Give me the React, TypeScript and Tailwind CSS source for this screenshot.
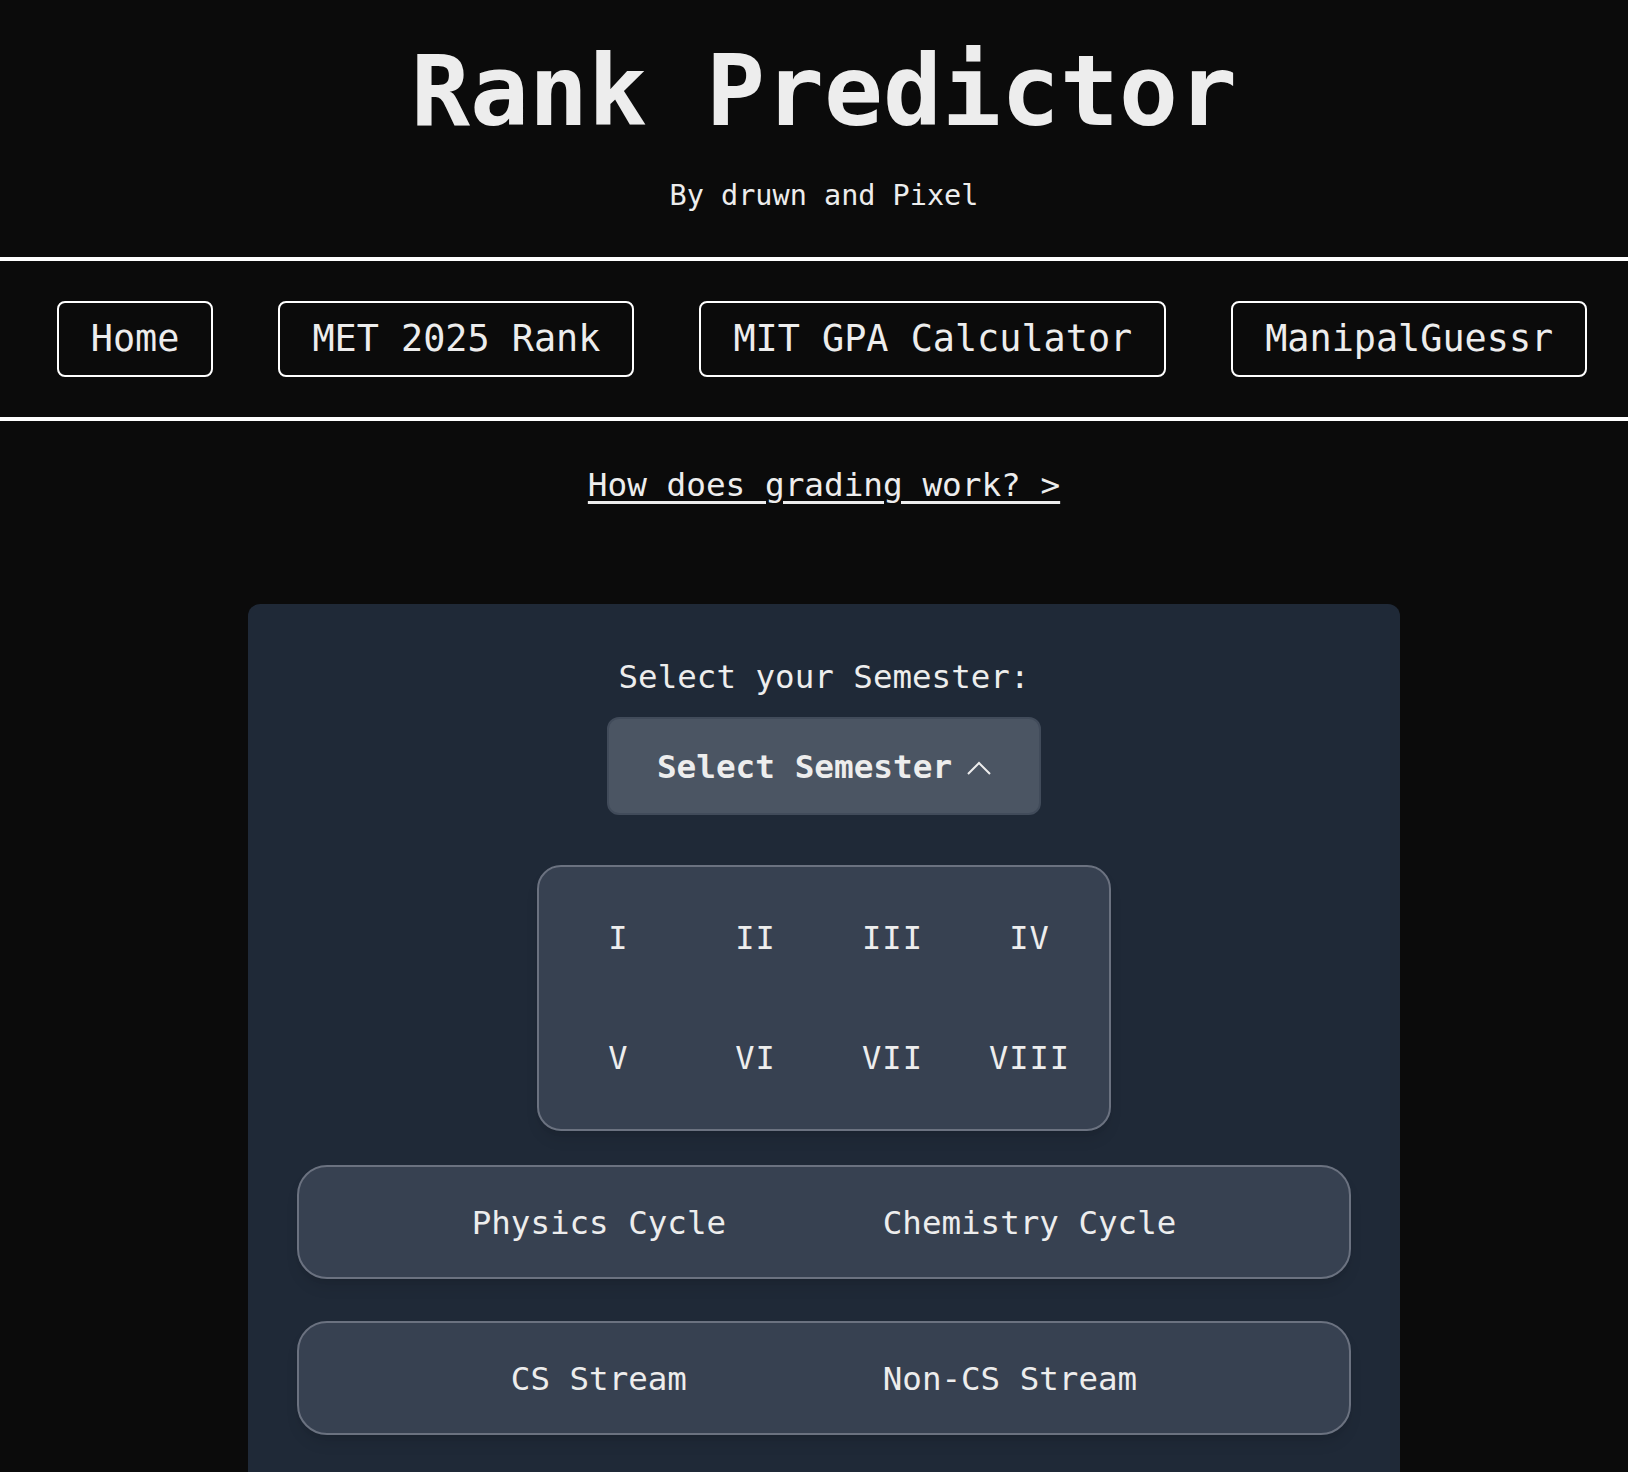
const font = { fontFamily: '"DejaVu Sans Mono", "Liberation Mono", monospace' };

const navItems = ["Home", "MET 2025 Rank", "MIT GPA Calculator", "ManipalGuessr"];
const semesters = ["I", "II", "III", "IV", "V", "VI", "VII", "VIII"];

function ChoiceRow({ left, right }: { left: string; right: string }) {
  return (
    <div className="flex h-[114px] w-full items-center justify-evenly rounded-[30px] border-2 border-[#6b7280] bg-[#374151] px-4 pt-1 shadow-lg">
      <button className="text-[32.5px] leading-none text-[#ededed]">{left}</button>
      <button className="text-[32.5px] leading-none text-[#ededed]">{right}</button>
    </div>
  );
}

export default function App() {
  return (
    <div className="min-h-screen bg-[#0b0b0b] text-[#ededed]" style={font}>
      <header className="flex flex-col items-center pl-5 pt-[42px] pb-[46px]">
        <h1 className="text-[98px] font-bold leading-none">Rank Predictor</h1>
        <p className="mt-[42px] text-[28.5px] leading-none">By druwn and Pixel</p>
      </header>

      <nav className="flex justify-center gap-[65px] border-y-4 border-white py-[40px] pl-4">
        {navItems.map((item) => (
          <a
            key={item}
            href="#"
            className="rounded-lg border-2 border-white px-8 py-4 text-[36.8px] leading-10"
          >
            {item}
          </a>
        ))}
      </nav>

      <div className="mt-12 flex justify-center pl-5">
        <a href="#" className="text-[32.7px] leading-none underline underline-offset-[5px]">
          How does grading work? &gt;
        </a>
      </div>

      <div className="mt-[103px] flex justify-center pl-5">
        <div className="flex w-[1152px] flex-col items-center rounded-xl bg-[#1f2937] px-[49px] pt-[57px] pb-16">
          <p className="text-[32.5px] leading-none">Select your Semester:</p>

          <button className="mt-[23px] flex h-[98px] items-center gap-[15px] rounded-xl border-2 border-[#414b5a] bg-[#4b5563] px-12 pt-1">
            <span className="text-[32.7px] font-bold leading-none">Select Semester</span>
            <svg width="24" height="14" viewBox="0 0 24 14" fill="none">
              <polyline points="1,13 12,2 23,13" stroke="#ededed" strokeWidth="2" />
            </svg>
          </button>

          <div className="mt-[50px] grid w-[574px] grid-cols-4 rounded-[24px] border-2 border-[#6b7280] bg-[#374151] p-[11px] shadow-lg">
            {semesters.map((s) => (
              <button key={s} className="flex h-[120px] items-center justify-center text-[32px] leading-none tracking-[1px]">
                {s}
              </button>
            ))}
          </div>

          <div className="mt-[34px] flex w-full flex-col gap-[42px]">
            <ChoiceRow left="Physics Cycle" right="Chemistry Cycle" />
            <ChoiceRow left="CS Stream" right="Non-CS Stream" />
          </div>
        </div>
      </div>
    </div>
  );
}
